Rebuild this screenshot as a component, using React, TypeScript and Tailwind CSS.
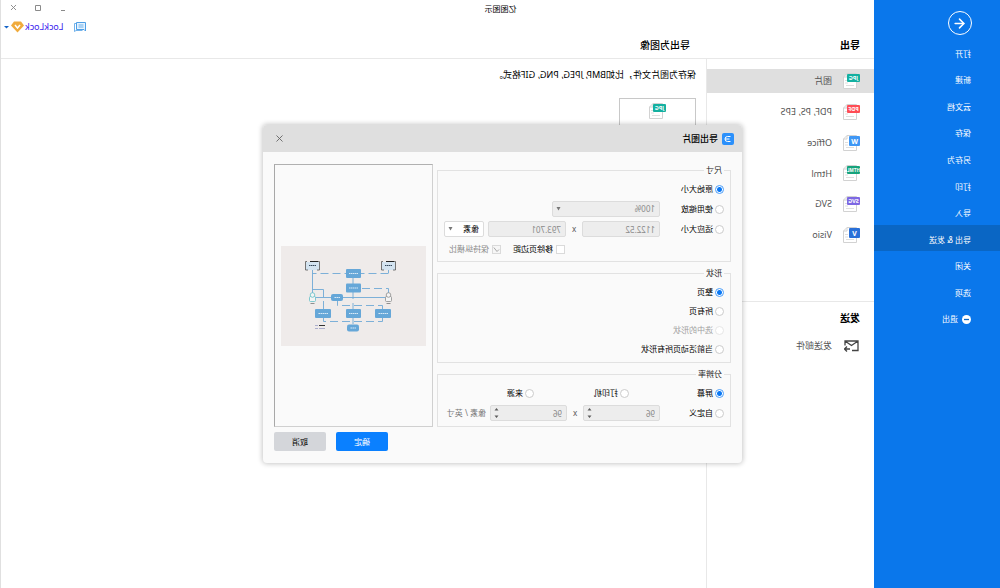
import type { ReactNode } from 'react';
import { ArrowLeft, X } from 'lucide-react';

const menuItems = ['打开', '新建', '云文档', '保存', '另存为', '打印', '导入', '导出 & 发送', '关闭', '选项'];

const formats = [
  { name: '图片', badge: 'JPG', color: '#14b0a0', square: false },
  { name: 'PDF, PS, EPS', badge: 'PDF', color: '#ff4d55', square: false },
  { name: 'Office', badge: 'W', color: '#3f97f5', square: true },
  { name: 'Html', badge: 'HTML', color: '#16a37c', square: false },
  { name: 'SVG', badge: 'SVG', color: '#7d68e3', square: false },
  { name: 'Visio', badge: 'V', color: '#2a70d8', square: true },
];

function FileIcon({ badge, color, square }: { badge: string; color: string; square: boolean }) {
  return (
    <svg width="18" height="16" viewBox="0 0 18 16" className="shrink-0">
      <path d="M3.5.5H13L16.500 4V15.500H3.500Z" fill="#fff" stroke="#d2d2d2" />
      <path d="M13 .5V4H16.500" fill="none" stroke="#d2d2d2" />
      <path d="M6 12.500H14M12 7.500H15M12 10H15" stroke="#dedede" />
      <rect x="0" y="1" width={square ? 11 : 13} height={square ? 10 : 8} rx="1" fill={color} />
      <text
        x={square ? 5.5 : 6.5}
        y={square ? 8.5 : 7}
        textAnchor="middle"
        fontSize={square ? 7 : badge.length > 3 ? 4.5 : 5.5}
        fontWeight="700"
        fill="#fff"
      >
        {badge}
      </text>
    </svg>
  );
}

function Radio({ name, label, checked, disabled, className = '' }: { name: string; label: string; checked?: boolean; disabled?: boolean; className?: string }) {
  return (
    <label className={`flex items-center gap-0.5 whitespace-nowrap ${disabled ? 'text-[#a0a0a0]' : 'text-black'} ${className}`}>
      <input
        type="radio"
        name={name}
        defaultChecked={checked}
        disabled={disabled}
        className="size-[9px] shrink-0 appearance-none rounded-full border border-[#cbcbcb] bg-white checked:border-[#4a9df8] checked:bg-[radial-gradient(circle,#0a78f5_0_2px,#fff_3px)] disabled:border-[#e6e6e6]"
      />
      {label}
    </label>
  );
}

function Check({ label, checked, disabled }: { label: string; checked?: boolean; disabled?: boolean }) {
  return (
    <label className={`flex items-center gap-[3px] whitespace-nowrap ${disabled ? 'text-[#8c8c8c]' : 'text-black'}`}>
      <span className="relative flex">
        <input
          type="checkbox"
          defaultChecked={checked}
          disabled={disabled}
          className="size-[9px] appearance-none border border-[#dadada] bg-white disabled:bg-[#f6f6f6]"
        />
        {checked && (
          <svg viewBox="0 0 9 9" className="pointer-events-none absolute inset-0 size-[9px]">
            <path d="M2 4.500L4 6.500L7.200 2.500" fill="none" stroke="#a8a8a8" />
          </svg>
        )}
      </span>
      {label}
    </label>
  );
}

function Dropdown({ label, value, disabled, className }: { label: string; value: string; disabled?: boolean; className: string }) {
  return (
    <div className={`relative h-4 ${className}`}>
      <select
        aria-label={label}
        disabled={disabled}
        className="block h-4 w-full appearance-none rounded-xs border border-[#dcdcdc] bg-white pl-1 leading-none text-black opacity-100 disabled:bg-[#ededed] disabled:text-[#8a8a8a]"
      >
        <option>{value}</option>
      </select>
      <svg viewBox="0 0 5 4" className="pointer-events-none absolute top-1.5 right-1 h-1 w-[5px]">
        <path d="M.5 0H4.500L2.500 3.500Z" fill="#777" />
      </svg>
    </div>
  );
}

function SizeInput({ label, value, spinner }: { label: string; value: string; spinner?: boolean }) {
  return (
    <div className={`relative h-4 ${spinner ? 'w-[77px]' : 'w-[78px]'}`}>
      <input
        aria-label={label}
        defaultValue={value}
        disabled
        className="block h-4 w-full rounded-xs border border-[#dcdcdc] bg-[#ededed] pl-1 text-[#8a8a8a]"
      />
      {spinner && (
        <svg viewBox="0 0 5 10" className="pointer-events-none absolute top-[3px] right-1 h-2.5 w-[5px]">
          <path d="M.5 2.500H4.500L2.500 0ZM.5 7.500H4.500L2.500 10Z" fill="#5c5c5c" />
        </svg>
      )}
    </div>
  );
}

function Group({ title, className, children }: { title: string; className: string; children: ReactNode }) {
  return (
    <fieldset className="min-w-0 border border-[#e2e2e2] px-1.5 pb-1">
      <legend className="h-3 px-0.5 leading-3 text-[#222]">{title}</legend>
      <div className={`flex flex-col pt-[5px] ${className}`}>{children}</div>
    </fieldset>
  );
}

const nodes = [
  { x: 65, y: 23, w: 15, h: 9, r: 1 },
  { x: 65, y: 37.5, w: 15, h: 9, r: 1 },
  { x: 83, y: 48, w: 12, h: 7, r: 2 },
  { x: 95, y: 63, w: 16, h: 9, r: 1 },
  { x: 65, y: 63, w: 15, h: 9, r: 1 },
  { x: 35, y: 63, w: 16, h: 9, r: 1 },
  { x: 67, y: 78.5, w: 12, h: 7, r: 2 },
];

function Diagram() {
  return (
    <svg viewBox="0 0 145 100" className="w-full bg-[#efebea]" role="img" aria-label="预览">
      <g fill="none" stroke="#6fa9d6" strokeWidth="0.9">
        <path d="M113.500 24V48M37.500 24V27M73 32V38M73 46V53M73 57V63M73 72V78" />
        <path d="M37.500 51.500H113.500M113.500 43.500H102.500V51M102.500 55V63M88.500 55V59.500" />
        <path d="M37.500 27.500H113.500M37.500 48V42.500H65M43.500 63V59.500H88.500M43.500 72V75.500H102.500V72" strokeDasharray="8 4" />
      </g>
      {nodes.map((n, i) => (
        <g key={i}>
          <rect x={n.x} y={n.y} width={n.w} height={n.h} rx={n.r} fill="#66a7d8" />
          <path d={`M${n.x + 3} ${n.y + n.h / 2}H${n.x + n.w - 3}`} stroke="#d8eaf7" strokeDasharray="1.500 0.400" />
        </g>
      ))}
      {[31, 107].map(x => (
        <g key={x}>
          <rect x={x} y="16" width="13" height="8" fill="#d3e3f0" />
          <path d={`M${x + 1} 15.500H${x + 9}`} stroke="#222" />
          <path d={`M${x + 1} 15.500H${x - 0.5}V24H${x + 2}M${x + 12} 15.500H${x + 13.5}V24H${x + 11}`} fill="none" stroke="#555" strokeWidth="0.800" />
          <path d={`M${x + 3} 19.500H${x + 10}`} stroke="#36495c" strokeDasharray="1.500 0.500" />
        </g>
      ))}
      {[{ x: 37.5, c: '#8d8d8d' }, { x: 113.5, c: '#62bfc6' }].map(p => (
        <g key={p.x} fill="#f4f4f4" stroke={p.c} strokeWidth="0.800">
          <rect x={p.x - 3} y="50.500" width="6" height="5" rx="1" />
          <circle cx={p.x} cy="49" r="2.300" />
          <path d={`M${p.x - 2} 57.500H${p.x + 2}`} stroke="#777" />
        </g>
      ))}
      <path d="M101 79.500H107" stroke="#333" />
      <path d="M101 82.500H107M108 79.500H111M108 82.500H111" stroke="#9a9ec4" strokeWidth="0.800" />
    </svg>
  );
}

function ExportDialog() {
  return (
    <div role="dialog" aria-label="导出图片" className="w-[479px] overflow-hidden rounded-[4px] bg-[#fafafa] text-[8px] shadow-[0_0_5px_1px_rgba(0,0,0,0.22)]">
      <header className="flex h-[27px] items-center gap-1 bg-[#dfdfdf] pr-[11px] pl-2">
        <svg viewBox="0 0 12 12" className="size-3">
          <rect width="12" height="12" rx="2" fill="#2b90fb" />
          <path d="M3.500 3.500H6.500A2.500 2.500 0 0 1 6.500 8.500H3.500M4.500 6H9" fill="none" stroke="#fff" />
        </svg>
        <h2 className="flex-1 text-[9px] font-medium text-black">导出图片</h2>
        <button aria-label="关闭" className="text-[#666]">
          <X size={11} strokeWidth={2} />
        </button>
      </header>

      <div className="flex gap-1 px-[11px] pt-3">
        <div className="flex flex-1 flex-col gap-[5px]">
          <Group title="尺寸" className="gap-1">
            <div className="flex h-4 items-center">
              <Radio name="size" label="原始大小" checked />
            </div>
            <div className="flex h-4 items-center">
              <Radio name="size" label="使用缩放" className="w-16" />
              <Dropdown label="缩放" value="100%" disabled className="w-[108px]" />
            </div>
            <div className="flex h-4 items-center">
              <Radio name="size" label="适应大小" className="w-16" />
              <SizeInput label="宽度" value="1122.52" />
              <span className="w-4 text-center text-[#555]">x</span>
              <SizeInput label="高度" value="793.701" />
              <Dropdown label="单位" value="像素" className="ml-1 flex-1" />
            </div>
            <div className="flex h-4 items-center gap-3 pl-[159px]">
              <Check label="移除页边距" />
              <Check label="保持纵横比" checked disabled />
            </div>
          </Group>

          <Group title="形状" className="gap-[3px] pb-px">
            <Radio name="shape" label="整页" checked className="h-4" />
            <Radio name="shape" label="所有页" className="h-4" />
            <Radio name="shape" label="选中的形状" disabled className="h-4" />
            <Radio name="shape" label="当前活动页所有形状" className="h-4" />
          </Group>

          <Group title="分辨率" className="gap-1 pb-px">
            <div className="flex h-4 items-center">
              <Radio name="dpi" label="屏幕" checked className="w-[95px]" />
              <Radio name="dpi" label="打印机" className="w-[95px]" />
              <Radio name="dpi" label="来源" />
            </div>
            <div className="flex h-4 items-center">
              <Radio name="dpi" label="自定义" className="w-16" />
              <SizeInput label="水平分辨率" value="96" spinner />
              <span className="w-4 text-center text-[#555]">x</span>
              <SizeInput label="垂直分辨率" value="96" spinner />
              <span className="ml-1 whitespace-nowrap text-[#777]">像素 / 英寸</span>
            </div>
          </Group>
        </div>

        <div className="flex w-[159px] items-center border border-t-[#b0b0b0] border-r-[#a8a8a8] border-b-[#d0d0d0] border-l-[#d0d0d0] px-1.5">
          <Diagram />
        </div>
      </div>

      <footer className="flex justify-end gap-2.5 px-[11px] pt-[5px] pb-3">
        <button className="h-[19px] w-[52px] rounded-xs bg-[#0a80ff] text-white">确定</button>
        <button className="h-[19px] w-[52px] rounded-xs bg-[#d4d6da] text-black">取消</button>
      </footer>
    </div>
  );
}

export default function App() {
  return (
    <div className="relative flex min-h-screen -scale-x-100 overflow-hidden bg-white font-['Noto_Sans','Noto_Sans_CJK_SC',sans-serif] text-[9px] text-[#222]">
      <aside className="w-[126px] shrink-0 bg-[#0a77eb] pt-[11px] text-[8px] text-white">
        <button aria-label="返回" className="ml-7 flex size-6 items-center justify-center rounded-full border border-white">
          <ArrowLeft size={15} strokeWidth={2.5} />
        </button>
        <nav className="mt-1 flex h-[292px] flex-col">
          {menuItems.map(item => (
            <a key={item} href="#" className={`flex flex-1 items-center pt-[3px] pl-[29px] ${item === '导出 & 发送' ? 'bg-[#0a66c4]' : ''}`}>
              {item}
            </a>
          ))}
          <a href="#" className="flex flex-1 items-center gap-1 pt-[3px] pl-[29px]">
            <svg viewBox="0 0 9 9" className="size-[9px]">
              <circle cx="4.500" cy="4.500" r="4.500" fill="#fff" />
              <path d="M2 4.500H7" stroke="#0a66c4" strokeWidth="1.300" />
            </svg>
            退出
          </a>
        </nav>
      </aside>

      <main className="flex min-w-0 flex-1 flex-col border-r border-[#e0e0e0]">
        <header className="border-b border-[#e8e8e8]">
          <div className="flex h-[17px] items-center">
            <h1 className="flex-1 pr-[52px] text-center text-[8px] text-black">亿图图示</h1>
            <div className="flex w-[74px] items-center justify-between px-2 pb-0.5 text-[#8a8a8a]">
              <button aria-label="最小化">
                <svg viewBox="0 0 8 8" className="size-2"><path d="M2 6.500H6" stroke="currentColor" /></svg>
              </button>
              <button aria-label="最大化">
                <svg viewBox="0 0 8 8" className="size-2"><path d="M1.500 1.500H6.500V6.500H1.500Z" fill="none" stroke="currentColor" /></svg>
              </button>
              <button aria-label="关闭窗口">
                <X size={9} strokeWidth={2.5} />
              </button>
            </div>
          </div>
          <div className="flex h-5 items-center justify-end pr-[3px]">
            <button aria-label="消息" className="mr-2.5">
              <svg viewBox="0 0 12 10" className="h-2.5 w-3" fill="none" stroke="#4f9fe6">
                <path d="M.5 .5H9.500V7.500H2L.5 9Z" fill="#e6f3fe" />
                <path d="M9.500 1.500H11.500V9.500L10 8.500H3.500" strokeWidth="0.800" />
                <path d="M2.500 3H7.500M2.500 5H7.500" strokeWidth="0.800" />
              </svg>
            </button>
            <button className="flex items-center gap-px text-[#3a22ee]">
              LockLock
              <svg viewBox="0 0 13 12" className="h-3 w-[13px]">
                <path d="M3 .5H10L13 4.500L6.500 11.500L0 4.500Z" fill="#f0ab3c" />
                <path d="M4 4L6.500 7L9 4" fill="none" stroke="#fff" strokeWidth="1.500" />
              </svg>
              <svg viewBox="0 0 5 3" className="ml-px h-[3px] w-[5px]"><path d="M0 0H5L2.500 2.500Z" fill="#1464c8" /></svg>
            </button>
          </div>
          <div className="flex h-[21px] pb-[5px] text-[10px] leading-4 text-black">
            <h2 className="w-[184px] pl-3.5 font-bold">导出</h2>
            <h2 className="font-medium">导出为图像</h2>
          </div>
        </header>

        <div className="flex flex-1">
          <div className="w-[168px] shrink-0 border-r border-[#e8e8e8] pt-2.5 text-[#555]">
            <ul className="flex h-[178px] flex-col justify-between">
              {formats.map((f, i) => (
                <li key={f.name}>
                  <a href="#" className={`flex h-6 items-center gap-2.5 pl-3.5 ${i === 0 ? 'bg-[#dfdfdf]' : ''}`}>
                    <FileIcon badge={f.badge} color={f.color} square={f.square} />
                    {f.name}
                  </a>
                </li>
              ))}
            </ul>
            <section className="mt-[54px] border-t border-[#e8e8e8] pt-2">
              <h2 className="pl-3.5 text-[10px] leading-4 font-bold text-black">发送</h2>
              <a href="#" className="mt-2 flex h-6 items-center gap-3 pl-[15px]">
                <svg viewBox="0 0 15 12" className="h-3 w-[15px]" fill="none" stroke="#444" strokeWidth="1.300">
                  <path d="M7 10.500H1V1H14V5.500M1 1L7.500 5.500L14 1M9 9H14.500M12 6.500L14.500 9L12 11.500" />
                </svg>
                发送邮件
              </a>
            </section>
          </div>

          <section className="flex-1 pt-2.5 pl-2.5">
            <p className="text-[9px] leading-3 text-black">保存为图片文件，比如BMP, JPEG, PNG, GIF格式。</p>
            <button className="mt-[17px] flex h-20 w-[77px] justify-center border border-[#c8c8c8] pt-1">
              <FileIcon badge="JPG" color="#14b0a0" square={false} />
            </button>
          </section>
        </div>
      </main>

      <div className="absolute inset-0 flex items-center justify-center pr-[5px]">
        <ExportDialog />
      </div>
    </div>
  );
}
